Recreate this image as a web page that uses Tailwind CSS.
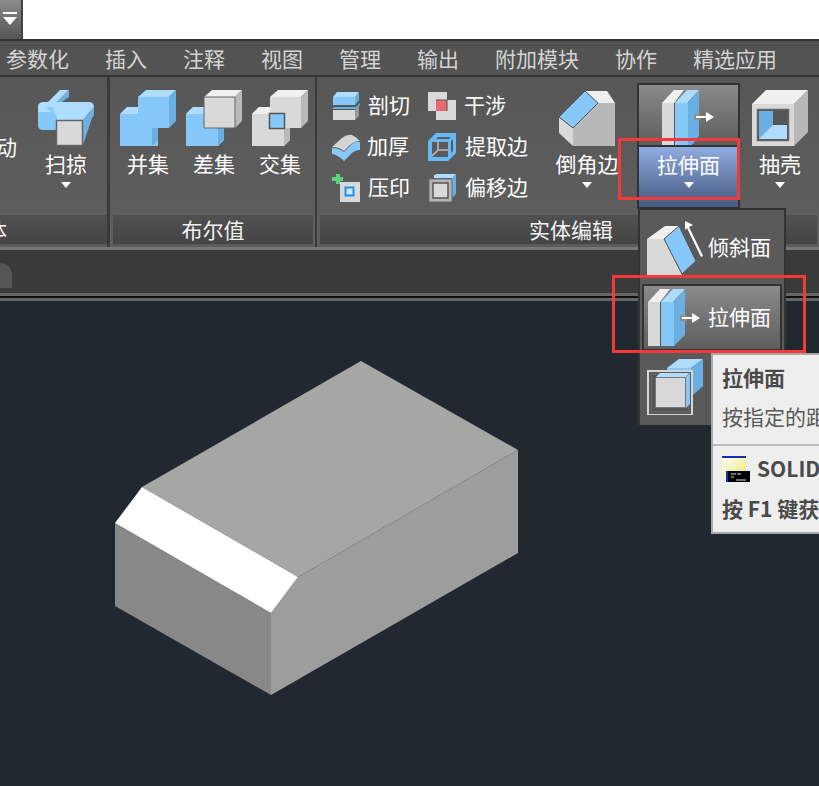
<!DOCTYPE html>
<html lang="zh"><head><meta charset="utf-8">
<script src="https://cdn.jsdelivr.net/npm/@tailwindcss/browser@4"></script>
<title>拉伸面</title></head>
<body class="m-0 bg-[#212830]">
<div class="relative w-[819px] h-[786px] overflow-hidden font-['Noto_Sans_CJK_SC','Noto_Sans',sans-serif] bg-[#212830]">

  <!-- title strip -->
  <div class="h-[39px] bg-white flex">
    <div class="w-[23px] h-full bg-gradient-to-b from-[#8c8c8c] to-[#555] flex flex-col items-center pt-[12px] pr-[1px] border-r-[2px] border-[#444]">
      <div class="w-[14px] h-[2px] bg-white"></div>
      <svg width="14" height="8" class="mt-[3px]"><path d="M0 0H14L7 8Z" fill="#fff"/></svg>
    </div>
  </div>

  <!-- tabs -->
  <div class="h-[38px] bg-[#535353] border-t-[2px] border-b-[2px] border-[#333] flex items-center gap-9 pl-[6px] text-[21px] leading-none text-[#d4d4d4]">
    <span>参数化</span><span>插入</span><span>注释</span><span>视图</span><span>管理</span><span>输出</span><span>附加模块</span><span>协作</span><span>精选应用</span>
  </div>

  <!-- ribbon -->
  <div class="h-[170px] flex bg-gradient-to-b from-[#575757] to-[#5f5f5f] text-white text-[21px] leading-none">
    <!-- panel 1 -->
    <section class="w-[110px] shrink-0 flex flex-col border-r-[3px] border-[#3a3a3a] overflow-hidden">
      <div class="h-[138px] flex">
        <div class="w-[17px] flex justify-end pt-[59px]"><span class="shrink-0">动</span></div>
        <div class="ml-[16px] w-[66px] flex flex-col items-center pt-[13px]">
          <svg width="56" height="56" viewBox="0 0 56 56">
            <path d="M22 0H31L19 12H10Z" fill="#aeddff"/><path d="M31 0V7L24 12H19Z" fill="#6cb0e4"/>
            <path d="M0 17Q0 12 6 12H50Q56 12 56 17L45 30H19L14 22H0Z" fill="#aeddff"/>
            <path d="M0 17H14L19 28V40H5Q0 40 0 35Z" fill="#86c8fa"/>
            <path d="M0 17Q0 14 3 13L14 22H0Z" fill="#aeddff"/>
            <path d="M56 17V24Q56 26 54 28L45 55V30Z" fill="#6cb0e4"/>
            <rect x="18.500" y="30.500" width="26" height="25" fill="#d9d9d9" stroke="#666" stroke-width="1.500"/>
          </svg>
          <span class="mt-[7px]">扫掠</span>
          <svg width="10" height="6" class="mt-[8px]"><path d="M0 0H10L5 6Z" fill="#fff"/></svg>
        </div>
      </div>
      <div class="h-[32px] relative bg-gradient-to-b from-[#505050] to-[#444] border-b-[3px] border-[#5c5c5c]"><span class="absolute left-[-35px] top-[4px]">实体</span></div>
    </section>

    <!-- panel 2 -->
    <section class="w-[206px] shrink-0 ml-[1px] flex flex-col border-r-[2px] border-[#3a3a3a]">
      <div class="h-[138px] flex pl-[4px]">
        <div class="w-[66px] flex flex-col items-center pt-[13px]">
          <svg width="56" height="56" viewBox="0 0 56 56">
            <path d="M18 7H49V38H38V56H0V24H18Z" fill="#86c8fa"/>
            <path d="M18 7L26 0H56L49 7Z" fill="#aeddff"/><path d="M49 7L56 0V31L49 38Z" fill="#69afe3"/>
            <path d="M0 24L7 17H18V24Z" fill="#aeddff"/>
            <path d="M32 38H38V50L32 56Z" fill="#69afe3"/>
          </svg>
          <span class="mt-[7px]">并集</span>
        </div>
        <div class="w-[66px] flex flex-col items-center pt-[13px]">
          <svg width="56" height="56" viewBox="0 0 56 56">
            <path d="M0 24L7 17H18V38H38V50L32 56H0Z" fill="#86c8fa"/>
            <path d="M32 38H38V50L32 56Z" fill="#69afe3"/>
            <path d="M0 24L7 17H18V24Z" fill="#aeddff"/>
            <path d="M18 7L26 0H56L49 7Z" fill="#f0f0f0"/><path d="M49 7L56 0V31L49 38Z" fill="#b9b9b9"/>
            <path d="M18 7H49V38H18Z" fill="#d9d9d9" stroke="#666" stroke-width="1"/>
          </svg>
          <span class="mt-[7px]">差集</span>
        </div>
        <div class="w-[66px] flex flex-col items-center pt-[13px]">
          <svg width="56" height="56" viewBox="0 0 56 56">
            <path d="M0 24L7 17H18V38H38V50L32 56H0Z" fill="#d9d9d9"/>
            <path d="M32 38H38V50L32 56Z" fill="#b9b9b9"/>
            <path d="M0 24L7 17H18V24Z" fill="#f0f0f0"/>
            <path d="M18 7L26 0H56L49 7Z" fill="#f0f0f0"/><path d="M49 7L56 0V31L49 38Z" fill="#b9b9b9"/>
            <path d="M18 7H49V38H18Z" fill="#d9d9d9"/>
            <rect x="17.500" y="23.500" width="15" height="15" fill="#86c8fa" stroke="#555" stroke-width="1.500"/>
          </svg>
          <span class="mt-[7px]">交集</span>
        </div>
      </div>
      <div class="h-[32px] mx-[2px] bg-gradient-to-b from-[#505050] to-[#444] border-b-[3px] border-[#5c5c5c] flex justify-center pt-[4px] text-[#f2f2f2]">布尔值</div>
    </section>

    <!-- panel 3 -->
    <section class="flex-1 ml-[1px] flex flex-col">
      <div class="h-[138px] flex">
        <div class="w-[110px] pl-[14px] pt-[15px] flex flex-col gap-[13px]">
          <div class="h-[28px] flex items-center gap-[8px]">
            <svg width="28" height="28" viewBox="0 0 28 28">
              <path d="M1 5L5 0H27L23 5Z" fill="#aeddff"/><path d="M1 5H23V13H1Z" fill="#86c8fa"/><path d="M23 5L27 0V8L23 13Z" fill="#69afe3"/>
              <path d="M0 17L2 15H24L28 11V13L24 17Z" fill="#69afe3"/>
              <path d="M1 18H23V28H1Z" fill="#d9d9d9"/><path d="M23 18L27 14V24L23 28Z" fill="#999"/>
            </svg><span class="pb-[4px]">剖切</span></div>
          <div class="h-[28px] flex items-center gap-[7px]">
            <svg width="28" height="28" viewBox="0 0 28 28">
              <path d="M0 15Q7 15 12 19L20 11Q24 8 28 9V17Q22 17 18 22L12 28Q6 22 0 21Z" fill="#86c8fa"/>
              <path d="M0 14L10 5Q15 1 20 2Q24 4 28 8Q23 8 18 12L12 18Q7 14 0 14Z" fill="#d4d4d4"/>
            </svg><span class="pb-[4px]">加厚</span></div>
          <div class="h-[28px] flex items-center gap-[8px]">
            <svg width="28" height="30" viewBox="0 0 28 30">
              <path d="M4 1H8V4H11V8H8V11H4V8H0V4H4Z" fill="#5dd17f"/>
              <rect x="8" y="9" width="20" height="20" fill="#d9d9d9"/>
              <rect x="13.500" y="14.500" width="8" height="8" fill="#cfe8ff" stroke="#1f8fe8" stroke-width="2"/>
            </svg><span class="pb-[4px]">压印</span></div>
        </div>
        <div class="w-[124px] pt-[15px] flex flex-col gap-[13px]">
          <div class="h-[28px] flex items-center gap-[8px]">
            <svg width="28" height="28" viewBox="0 0 28 28">
              <path d="M0 0H19V8H8V19H0Z" fill="#d9d9d9"/><path d="M8 8H28V28H8Z" fill="#d9d9d9"/>
              <rect x="8" y="8" width="11" height="11" fill="#e86a6f"/>
              <path d="M8 8H19V19" fill="none" stroke="#555" stroke-width="1"/>
            </svg><span class="pb-[4px]">干涉</span></div>
          <div class="h-[28px] flex items-center gap-[9px]">
            <svg width="28" height="28" viewBox="0 0 28 28">
              <path d="M0 8L8 0H28V20L20 28H0Z" fill="#69b9f5"/>
              <path d="M8 6L10 4H23L21 6Z M23 8L25 6V18L23 20Z M4 9H20V24H4Z" fill="#5a5a5a"/>
              <path d="M10 9V17L4 23 M10 17H20" stroke="#bdbdbd" stroke-width="1.500" fill="none"/>
            </svg><span class="pb-[4px]">提取边</span></div>
          <div class="h-[28px] flex items-center gap-[9px]">
            <svg width="28" height="28" viewBox="0 0 28 28">
              <path d="M8 0H28L25 3H6Z" fill="#aeddff"/><path d="M25 3L28 0V20L24 24V4Z" fill="#69afe3"/>
              <path d="M6 1H25V4H6Z" fill="#aeddff"/>
              <rect x="1" y="5" width="23" height="23" fill="#b5b5b5" stroke="#6a6a6a" stroke-width="1"/>
              <rect x="5" y="9" width="15" height="15" fill="#d9d9d9" stroke="#555" stroke-width="1.500"/>
            </svg><span class="pb-[4px]">偏移边</span></div>
        </div>
        <div class="w-[56px] ml-[7px] flex flex-col items-center pt-[13px] shrink-0">
          <svg width="56" height="56" viewBox="0 0 56 56">
            <path d="M14 38L39 13H56V56H14Z" fill="#b9b9b9"/>
            <path d="M0 27L14 38V56L0 43Z" fill="#d9d9d9"/>
            <path d="M26 1H48L56 13H39Z" fill="#f0f0f0"/>
            <path d="M0 27L26 1L39 13L14 38Z" fill="#86c8fa" stroke="#555" stroke-width="1"/>
          </svg>
          <span class="mt-[7px] whitespace-nowrap">倒角边</span>
          <svg width="10" height="6" class="mt-[8px]"><path d="M0 0H10L5 6Z" fill="#fff"/></svg>
        </div>
        <div class="w-[66px] ml-[132px] flex flex-col items-center pt-[13px] shrink-0">
          <svg width="56" height="56" viewBox="0 0 56 56">
            <path d="M0 14L14 0H56L42 14Z" fill="#f0f0f0"/><path d="M42 14L56 0V42L42 56Z" fill="#b9b9b9"/>
            <path d="M0 14H42V56H0Z" fill="#d9d9d9"/>
            <rect x="5.500" y="19.500" width="31" height="31" fill="#555" stroke="#666" stroke-width="1.500"/>
            <path d="M7 21H21V35H35V49H7Z" fill="#69afe3"/><path d="M7 49L21 35H35V49Z" fill="#aeddff"/>
          </svg>
          <span class="mt-[7px]">抽壳</span>
          <svg width="10" height="6" class="mt-[8px]"><path d="M0 0H10L5 6Z" fill="#fff"/></svg>
        </div>
      </div>
      <div class="h-[32px] mx-[2px] bg-gradient-to-b from-[#505050] to-[#444] border-b-[3px] border-[#5c5c5c] flex pl-[209px] pt-[4px] text-[#f2f2f2]">实体编辑</div>
    </section>
  </div>

  <!-- document tabs strip -->
  <div class="h-[3px] bg-[#787878]"></div>
  <div class="h-[43px] bg-[#3a3a3a] flex items-end pb-[5px]">
    <div class="w-[12px] h-[25px] bg-[#555] rounded-tr-[12px]"></div>
  </div>
  <div class="h-[3px] bg-[#666]"></div>
  <div class="h-[2px] bg-[#111]"></div>
  <div class="h-[3px] bg-[#666]"></div>

  <!-- drawing canvas: the solid -->
  <svg class="absolute left-0 top-[301px]" width="819" height="485" viewBox="0 301 819 485">
    <path d="M361 361L518 450L298 577L142 487Z" fill="#a5a7a4"/>
    <path d="M298 577L518 450V553L271 695V613Z" fill="#9c9e9d"/>
    <path d="M115 523L271 613V695L115 606Z" fill="#888"/>
    <path d="M142 487L298 577L271 613L115 523Z" fill="#fff"/>
  </svg>

  <!-- active split button -->
  <div class="absolute left-[637px] top-[83px] w-[103px] h-[126px] border-[2px] border-[#333] flex flex-col text-white text-[21px] leading-none">
    <div class="h-[62px] bg-gradient-to-b from-[#8a8a8a] to-[#5e5e5e] border-b-[2px] border-[#333] overflow-hidden flex justify-center pt-[5px]">
      <svg width="52" height="60" viewBox="0 0 52 60" class="ml-[-2px]">
        <path d="M0 13L12 0H22L12 13Z" fill="#f0f0f0"/><path d="M0 13H12V60H0Z" fill="#d9d9d9"/>
        <path d="M12 13H13V60H12Z" fill="#555"/>
        <path d="M13 13L25 0H37L25 13Z" fill="#aeddff"/><path d="M13 13H26V60H13Z" fill="#86c8fa"/><path d="M26 13L37 0V46L26 60Z" fill="#69afe3"/>
        <path d="M32 24H38V30H32Z" fill="#8c8c8c"/>
        <path d="M34 26H44V22L52 27L44 32V28H34Z" fill="#fff"/>
      </svg>
    </div>
    <div class="flex-1 bg-gradient-to-b from-[#90ace0] to-[#465a80] flex flex-col items-center pt-[7px]">
      <span>拉伸面</span>
      <svg width="10" height="6" class="mt-[7px]"><path d="M0 0H10L5 6Z" fill="#fff"/></svg>
    </div>
  </div>

  <!-- dropdown menu -->
  <div class="absolute left-[638px] top-[208px] w-[148px] h-[217px] bg-[#5a5a5a] border-t-[2px] border-x-[2px] border-[#333] border-b-0 text-white text-[21px] leading-none px-[2px]">
    <div class="h-[74px] flex items-center gap-[5px] pl-[5px]">
      <svg width="56" height="56" viewBox="0 0 56 56" class="mt-[4px]">
        <path d="M0 18L18 5H32L17 18Z" fill="#f0f0f0"/><path d="M0 18H17L35 54V56H0Z" fill="#d9d9d9"/>
        <path d="M17 18L32 5L49 40L35 53Z" fill="#86c8fa" stroke="#555" stroke-width="1"/>
        <path d="M38 0L46 4L42 6L56 35L54 36L40 7L38 9Z" fill="#fff"/>
      </svg>
      <span class="pb-[2px]">倾斜面</span>
    </div>
    <div class="h-[67px] border-[2px] border-[#333] bg-gradient-to-b from-[#8a8a8a] to-[#5e5e5e] flex items-center pl-[4px]">
      <svg width="52" height="57" viewBox="0 0 52 57" class="shrink-0">
        <path d="M0 13L12 0H22L12 13Z" fill="#f0f0f0"/><path d="M0 13H12V57H0Z" fill="#d9d9d9"/>
        <path d="M12 13H13V57H12Z" fill="#555"/>
        <path d="M13 13L25 0H37L25 13Z" fill="#aeddff"/><path d="M13 13H26V57H13Z" fill="#86c8fa"/><path d="M26 13L37 0V46L26 57Z" fill="#69afe3"/>
      </svg>
      <svg width="20" height="12" viewBox="0 0 20 12" class="-ml-[20px] shrink-0"><path d="M0 3H7V9H0Z" fill="#8c8c8c"/><path d="M2 5H12V1L20 6L12 11V7H2Z" fill="#fff"/></svg>
      <span class="ml-[8px] whitespace-nowrap pb-[2px]">拉伸面</span>
    </div>
    <div class="pl-[5px] pt-[8px]">
      <svg width="56" height="56" viewBox="0 0 56 56">
        <path d="M20 9L32 0H56L44 9Z" fill="#aeddff"/><path d="M44 9L56 0V27L44 38Z" fill="#69afe3"/><path d="M20 9H44V16H20Z" fill="#86c8fa"/>
        <rect x="1" y="12" width="44" height="44" fill="#5a5a5a" stroke="#d5d5d5" stroke-width="2"/>
        <rect x="4.500" y="15.500" width="37" height="37" fill="#555" stroke="#666" stroke-width="1"/>
        <path d="M9 18L13 14H42L39 18Z" fill="#aeddff"/><path d="M39 18L43 14V45L39 49Z" fill="#86c8fa"/>
        <rect x="8.500" y="18.500" width="30" height="30" fill="#d9d9d9" stroke="#777"/>
      </svg>
    </div>
  </div>

  <!-- tooltip -->
  <div class="absolute left-[711px] top-[353px] w-[140px] h-[181px] bg-[#eeeeee] border-[2px] border-[#a8a8a8] text-[#4a4a4a] whitespace-nowrap pl-[9px]">
    <div class="h-[89px] pt-[8px]">
      <div class="text-[21px] leading-[28px] font-bold">拉伸面</div>
      <div class="text-[21px] leading-[28px] mt-[11px] text-[#5a5a5a]">按指定的距离</div>
    </div>
    <div class="h-[2px] -ml-[9px] bg-[#bcbcbc]"></div>
    <div class="h-[46px] flex items-center gap-[7px]">
      <svg width="28" height="26" viewBox="0 0 28 26" class="shrink-0">
        <defs><linearGradient id="yl" x1="0" y1="0" x2="1" y2="1"><stop offset="0" stop-color="#ffffff"/><stop offset="1" stop-color="#ecea70"/></linearGradient></defs>
        <rect x="0" y="0" width="24" height="21" fill="url(#yl)"/><rect x="0" y="0" width="24" height="2" fill="#1030b0"/>
        <rect x="4" y="15" width="24" height="11" fill="#000"/><rect x="4" y="15" width="2" height="11" fill="#1030b0"/>
        <path d="M9 18H14M15 18H19M9 21H12M14 24H24" stroke="#ddd" stroke-width="1"/>
      </svg>
      <span class="text-[21px] font-bold">SOLIDEDIT</span>
    </div>
    <div class="text-[21px] leading-[28px] font-bold mt-[2px]">按 F1 键获得更多帮助</div>
  </div>

  <!-- red callouts -->
  <div class="absolute left-[618px] top-[138px] w-[122px] h-[62px] border-[3px] border-[#f23a3a]"></div>
  <div class="absolute left-[612px] top-[275px] w-[194px] h-[78px] border-[3px] border-[#f23a3a]"></div>
</div>
</body></html>
